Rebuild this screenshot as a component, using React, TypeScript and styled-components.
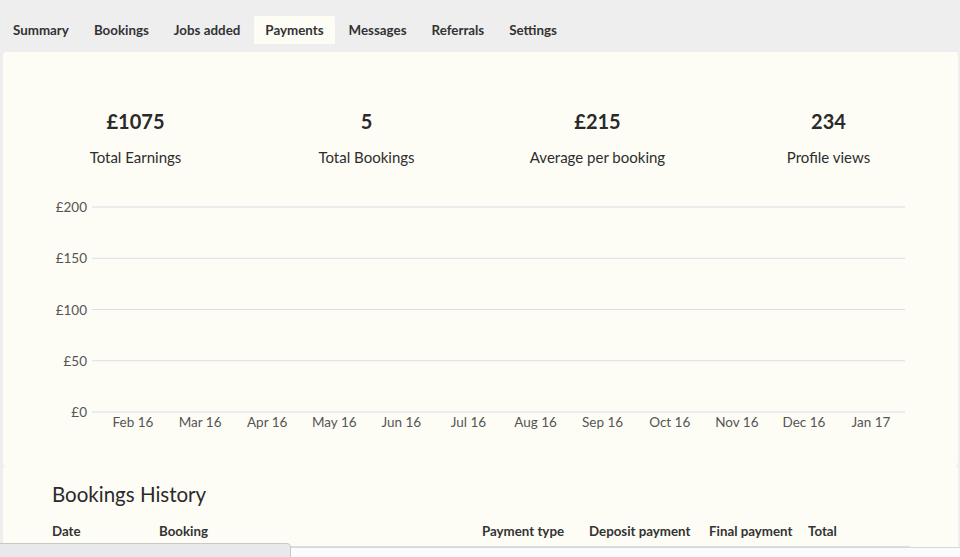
import React from "react";
import styled, { createGlobalStyle } from "styled-components";

const GlobalStyle = createGlobalStyle`
  html, body { margin: 0; padding: 0; }
  body {
    background: #eeeeee;
    font-family: Lato, "Open Sans", sans-serif;
    color: #2d2d2d;
    width: 960px;
    height: 557px;
    overflow: hidden;
  }
`;

const Page = styled.div`
  position: relative;
  width: 960px;
  height: 557px;
  overflow: hidden;
  background: #eeeeef;
`;

const TabBar = styled.nav`
  display: flex;
  gap: 3px;
  padding: 16px 0 0 2px;
  height: 28px;
`;

const Tab = styled.div<{ $active?: boolean }>`
  display: flex;
  align-items: center;
  height: 28px;
  padding: 0 11px;
  font-size: 13.35px;
  font-weight: 700;
  color: #333;
  background: ${(p) => (p.$active ? "#fdfdf6" : "transparent")};
  border-radius: 2px 2px 0 0;
`;

const Panel = styled.section`
  margin: 0 2px 0 3px;
  background: #fdfdf6;
  border-radius: 3px;
`;

const ChartPanel = styled(Panel)`
  margin-top: 8px;
  height: 414px;
  padding: 0 14px 0 17px;
  box-sizing: border-box;
`;

const Stats = styled.div`
  display: grid;
  grid-template-columns: repeat(4, 231px);
  padding-top: 56px;
`;

const Stat = styled.div`
  display: flex;
  flex-direction: column;
  align-items: center;
`;

const StatValue = styled.div`
  font-size: 20px;
  font-weight: 700;
  line-height: 26px;
  color: #2a2a2a;
`;

const StatLabel = styled.div`
  margin-top: 13px;
  font-size: 15px;
  line-height: 20px;
  color: #2d2d2d;
`;

const ChartSvg = styled.svg`
  display: block;
  margin-top: 28px;
`;

const HistoryPanel = styled(Panel)`
  height: 120px;
  padding: 15px 48px 0 42px;
  box-sizing: border-box;
`;

const Heading = styled.h2`
  margin: 0;
  padding-left: 7px;
  font-size: 20.5px;
  font-weight: 400;
  line-height: 26px;
  color: #2a2a2a;
`;

const HeaderRow = styled.div`
  display: grid;
  grid-template-columns: 107px 323px 107px 120px 99px 1fr;
  margin-top: 9px;
  height: 32px;
  align-items: center;
  border-bottom: 2px solid #dedee2;
  box-sizing: border-box;
`;

const HeaderCell = styled.div`
  padding-left: 7px;
  font-size: 13.3px;
  font-weight: 700;
  color: #333;
  white-space: nowrap;
`;

const StatusBubble = styled.div`
  position: absolute;
  left: -1px;
  bottom: -2px;
  width: 290px;
  height: 14px;
  background: #e9e9ec;
  border: 1px solid #c9c9cc;
  border-radius: 0 4px 0 0;
`;

const BottomEdge = styled.div`
  position: absolute;
  left: 290px;
  right: 0;
  bottom: 0;
  height: 9px;
  background: #fbfbfb;
  border-top: 1px solid #d9d9dc;
`;

const tabs = ["Summary", "Bookings", "Jobs added", "Payments", "Messages", "Referrals", "Settings"];
const stats = [
  { value: "£1075", label: "Total Earnings" },
  { value: "5", label: "Total Bookings" },
  { value: "£215", label: "Average per booking" },
  { value: "234", label: "Profile views" },
];
const yTicks = ["£200", "£150", "£100", "£50", "£0"];
const months = ["Feb 16", "Mar 16", "Apr 16", "May 16", "Jun 16", "Jul 16", "Aug 16", "Sep 16", "Oct 16", "Nov 16", "Dec 16", "Jan 17"];
const columns = ["Date", "Booking", "Payment type", "Deposit payment", "Final payment", "Total"];

function Chart() {
  const ox = 20;
  const oy = 195;
  return (
    <ChartSvg width={924} height={245} viewBox="0 0 924 245">
      {yTicks.map((t, i) => {
        const y = 207 + i * 51.25 - oy;
        return (
          <g key={t}>
            <line x1={92 - ox} x2={905 - ox} y1={y} y2={y} stroke="#dcdce6" strokeWidth={1} />
            <text
              x={87 - ox}
              y={y}
              textAnchor="end"
              dominantBaseline="central"
              fontFamily="Lato, sans-serif"
              fontSize={13.5}
              fill="#555"
            >
              {t}
            </text>
          </g>
        );
      })}
      {months.map((m, i) => (
        <text
          key={m}
          x={133 + i * 67.09 - ox}
          y={422 - oy}
          textAnchor="middle"
          dominantBaseline="central"
          fontFamily="Lato, sans-serif"
          fontSize={13.5}
          fill="#555"
        >
          {m}
        </text>
      ))}
    </ChartSvg>
  );
}

export default function App() {
  return (
    <Page>
      <GlobalStyle />
      <TabBar>
        {tabs.map((t) => (
          <Tab key={t} $active={t === "Payments"}>
            {t}
          </Tab>
        ))}
      </TabBar>
      <ChartPanel>
        <Stats>
          {stats.map((s) => (
            <Stat key={s.label}>
              <StatValue>{s.value}</StatValue>
              <StatLabel>{s.label}</StatLabel>
            </Stat>
          ))}
        </Stats>
        <Chart />
      </ChartPanel>
      <HistoryPanel>
        <Heading>Bookings History</Heading>
        <HeaderRow>
          {columns.map((c) => (
            <HeaderCell key={c}>{c}</HeaderCell>
          ))}
        </HeaderRow>
      </HistoryPanel>
      <BottomEdge />
      <StatusBubble />
    </Page>
  );
}
